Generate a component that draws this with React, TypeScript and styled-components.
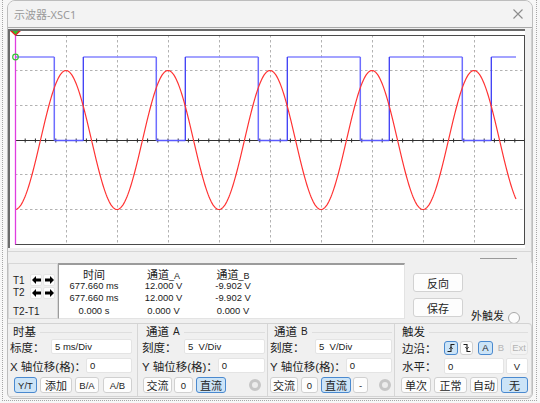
import React from 'react';
import styled, { createGlobalStyle } from 'styled-components';

const SANS = `"Liberation Sans", "Noto Sans CJK SC", sans-serif`;

const GlobalStyle = createGlobalStyle`
  html, body { margin: 0; padding: 0; background: #f7f7f7; }
  body { font-family: ${SANS}; color: #1e1e1e; }
  * { box-sizing: border-box; }
`;

const Desk = styled.div`
  margin-left: 2px;
  width: 535px;
  height: 401px;
  border-left: 1px dotted #a6a6a6;
  border-right: 1px dotted #a6a6a6;
  border-bottom: 1px dotted #a6a6a6;
  padding-left: 4px;
`;

const Window = styled.div`
  width: 526px;
  height: 399px;
  border: 1px solid #bdbdbd;
  border-radius: 8px 8px 6px 6px;
  background: #f0f0f0;
  display: flex;
  flex-direction: column;
  overflow: hidden;
`;

const TitleBar = styled.div`
  height: 27px;
  flex: none;
  background: #f3f3f3;
  border-bottom: 1px solid #a9a9a9;
  display: flex;
  align-items: center;
  justify-content: space-between;
  padding: 0 9px 1px 6px;
  font-family: "Noto Sans", "Noto Sans CJK SC", sans-serif;
  font-size: 11px;
  color: #9a9a9a;
`;

const ScreenArea = styled.div`
  margin-top: 1px;
  width: 524px;
  border-right: 1px solid #d0d0d0;
  display: flex;
  flex-direction: column;
`;

const Screen = styled.div`
  width: 517px;
  height: 219px;
  border-top: 2px solid #6b6b6b;
  border-left: 2px solid #6b6b6b;
  background: #fff;
  display: flex;
`;

const Strip = styled.div`
  height: 15px;
  padding-top: 3px;
  display: flex;
  flex-direction: column;
`;

const Rule = styled.div`
  height: 1px;
  background: #d6d6d6;
`;

const Thumb = styled.div`
  align-self: flex-end;
  width: 37px;
  height: 1px;
  margin-top: 6px;
  margin-right: 14px;
  background: #9a9a9a;
`;

const Readout = styled.div`
  height: 56px;
  display: flex;
  flex: none;
`;

const CursorBox = styled.div`
  width: 50px;
  border: 1px solid #d7d7d7;
  background: #f0f0f0;
  padding: 10px 0 0 4px;
  display: flex;
  flex-direction: column;
`;

const CursorRow = styled.div<{ $h: number; $mt?: number }>`
  height: ${p => p.$h}px;
  margin-top: ${p => p.$mt ?? 0}px;
  display: grid;
  grid-template-columns: 16px 12px 12px;
  column-gap: 1px;
  align-items: center;
  font-size: 10px;
  white-space: nowrap;
`;

const ArrowBtn = styled.div`
  width: 12px;
  height: 12px;
  background: #fdfdfd;
  border: 1px solid #e6e6e6;
  border-radius: 2px;
  display: flex;
  align-items: center;
  justify-content: center;
`;

const DataBox = styled.div`
  width: 347px;
  background: #fff;
  border-top: 2px solid #9b9b9b;
  border-left: 1px solid #9b9b9b;
  border-right: 1px solid #e3e3e3;
  border-bottom: 1px solid #e3e3e3;
  padding-top: 3px;
  display: grid;
  grid-template-columns: 70px 69px 70px;
  grid-template-rows: 11px 12px 13px 13px;
  justify-items: center;
  align-items: center;
  align-content: start;
  font-size: 9.4px;
  color: #1a1a1a;
`;

const HeadCell = styled.div`
  font-size: 11px;
  white-space: nowrap;
  color: #222;
`;

const Sub = styled.span<{ $size?: number }>`
  font-size: ${p => p.$size ?? 9}px;
`;

const SideButtons = styled.div`
  margin-left: 8px;
  padding-top: 10px;
  display: flex;
  flex-direction: column;
  gap: 6px;
`;

const SideBtn = styled.button`
  width: 50px;
  height: 19px;
  padding: 0;
  border: 1px solid #d2d2d2;
  border-radius: 3px;
  background: #fdfdfd;
  font-family: ${SANS};
  font-size: 11px;
  color: #222;
  display: flex;
  align-items: center;
  justify-content: center;
`;

const ExtTrig = styled.div`
  margin-left: 8px;
  align-self: flex-end;
  margin-bottom: -3px;
  height: 14px;
  display: flex;
  align-items: center;
  gap: 4px;
  font-size: 11px;
  color: #222;
`;

const Radio = styled.div`
  width: 12px;
  height: 12px;
  margin-top: 5px;
  border-radius: 50%;
  border: 1px solid #a8a8a8;
  background: #fcfcfc;
`;

const Panel = styled.div`
  margin-top: 4px;
  width: 524px;
  height: 74px;
  border: 1px solid #d3d3d3;
  border-left: none;
  border-radius: 0 4px 4px 0;
  display: flex;
`;

const Group = styled.div<{ $w?: number; $pl: number; $pr: number; $sep?: boolean }>`
  ${p => (p.$w ? `width: ${p.$w}px;` : 'flex: 1;')}
  padding-left: ${p => p.$pl}px;
  padding-right: ${p => p.$pr}px;
  border-right: ${p => (p.$sep ? '1px solid #d6d6d6' : 'none')};
  display: flex;
  flex-direction: column;
`;

const GroupHead = styled.div<{ $ml: number }>`
  height: 14px;
  margin-left: ${p => p.$ml}px;
  display: flex;
  align-items: center;
  gap: 4px;
  font-size: 11.5px;
  color: #222;
  white-space: nowrap;
`;

const HeadRule = styled.div`
  flex: 1;
  height: 1px;
  margin-top: 3px;
  background: #dedede;
`;

const FieldRow = styled.div<{ $h: number; $mt: number }>`
  height: ${p => p.$h}px;
  margin-top: ${p => p.$mt}px;
  display: flex;
  align-items: center;
  justify-content: space-between;
`;

const Label = styled.span`
  font-size: 11.5px;
  white-space: nowrap;
  color: #1e1e1e;
`;

const Field = styled.div<{ $w: number; $h?: number; $ml?: number; $center?: boolean }>`
  width: ${p => p.$w}px;
  height: ${p => p.$h ?? 15}px;
  margin-left: ${p => p.$ml ?? 0}px;
  background: #fff;
  border: 1px solid #e4e4e4;
  border-radius: 2px;
  padding-left: ${p => (p.$center ? 0 : 3)}px;
  display: flex;
  align-items: center;
  justify-content: ${p => (p.$center ? 'center' : 'flex-start')};
  font-size: 9.5px;
  color: #1a1a1a;
  white-space: pre;
`;

const BtnRow = styled.div<{ $mt: number; $h: number }>`
  height: ${p => p.$h}px;
  margin-top: ${p => p.$mt}px;
  display: flex;
  align-items: center;
`;

const Btn = styled.button<{ $w: number; $ml?: number; $on?: boolean; $off?: boolean; $latin?: boolean; $h?: number; $bare?: boolean }>`
  width: ${p => p.$w}px;
  height: ${p => p.$h ?? 16}px;
  margin-left: ${p => p.$ml ?? 0}px;
  padding: 0;
  flex: none;
  border: 1px solid ${p => (p.$on ? '#4a89cf' : p.$bare ? 'transparent' : p.$off ? '#e4e4e4' : '#d0d0d0')};
  border-radius: 3px;
  background: ${p => (p.$on ? '#cce4f7' : p.$bare ? 'transparent' : p.$off ? '#f3f3f3' : '#fdfdfd')};
  color: ${p => (p.$off || p.$bare ? '#b4b4b4' : '#1e1e1e')};
  font-family: ${SANS};
  font-size: ${p => (p.$latin ? 9.5 : 11)}px;
  display: flex;
  align-items: center;
  justify-content: center;
  white-space: nowrap;
`;

const Knob = styled.div<{ $ml: number }>`
  width: 12px;
  height: 12px;
  margin-left: ${p => p.$ml}px;
  border-radius: 50%;
  border: 3px solid #c6c6c6;
  background: #ececec;
  flex: none;
`;

/* ---------- scope drawing ---------- */

const sinePath = (() => {
  let d = '';
  for (let x = 15; x <= 516; x += 1) {
    const y = 140 + 69.5 * Math.cos((2 * Math.PI * (x - 15)) / 102);
    d += `${x === 15 ? 'M' : 'L'}${x} ${y.toFixed(2)} `;
  }
  return d;
})();

const rises = [83.3, 185.3, 287.3, 389.3, 491.3];
const falls = [54.3, 156.3, 258.3, 360.3, 462.3];
const highs: [number, number][] = [
  [15, 54.3],
  [83.3, 156.3],
  [185.3, 258.3],
  [287.3, 360.3],
  [389.3, 462.3],
  [491.3, 516],
];
const lows: [number, number][] = falls.map((f, i) => [f, rises[i]]);

const vGrid = Array.from({ length: 9 }, (_, i) => Math.round(15 + 51 * (i + 1)) + 0.5);
const hGrid = [70.5, 105.5, 174.5, 209.5];
const ticks = Array.from({ length: 50 }, (_, i) => 15 + 10.2 * (i + 1));

const ScopeSvg = () => (
  <svg width={515} height={217} viewBox="10 31 515 217">
    {vGrid.map(x => (
      <line key={'v' + x} x1={x} y1={35} x2={x} y2={244} stroke="#b2b2b2" strokeDasharray="2.5 2.5" />
    ))}
    {hGrid.map(y => (
      <line key={'h' + y} x1={15} y1={y} x2={524} y2={y} stroke="#b2b2b2" strokeDasharray="2.5 2.5" />
    ))}
    <line x1={15} y1={35.5} x2={524.5} y2={35.5} stroke="#4a4a4a" />
    <line x1={524.5} y1={35} x2={524.5} y2={244.5} stroke="#4a4a4a" />
    <line x1={15} y1={244.5} x2={524.5} y2={244.5} stroke="#4a4a4a" />
    <line x1={15} y1={140.5} x2={524} y2={140.5} stroke="#303030" />
    {ticks.map(x => (
      <line key={'t' + x} x1={x} y1={138.5} x2={x} y2={142.5} stroke="#303030" />
    ))}
    {lows.map(([a, b]) => (
      <line key={'l' + a} x1={a} y1={140.5} x2={b} y2={140.5} stroke="#5a5aff" strokeWidth={1.3} />
    ))}
    {highs.map(([a, b]) => (
      <line key={'hi' + a} x1={a} y1={57} x2={b} y2={57} stroke="#8585ff" strokeWidth={1.4} />
    ))}
    {rises.map(x => (
      <line key={'r' + x} x1={x} y1={57} x2={x} y2={140.5} stroke="#3b3bf5" strokeWidth={1.3} />
    ))}
    {falls.map(x => (
      <line key={'f' + x} x1={x} y1={57} x2={x} y2={140.5} stroke="#6d6dff" strokeWidth={1.5} />
    ))}
    <path d={sinePath} fill="none" stroke="#ff3434" strokeWidth={1.2} />
    <line x1={15.5} y1={30} x2={15.5} y2={244.5} stroke="#e03de0" strokeWidth={1.3} />
    <circle cx={15.5} cy={57} r={2.8} fill="none" stroke="#36c436" strokeWidth={1.2} />
    <polygon points="9,30 22,30 15.5,36" fill="#e52222" />
    <polygon points="12,30.5 19,30.5 15.5,34.5" fill="#2fc02f" />
  </svg>
);

const ArrowIcon = ({ dir }: { dir: 'l' | 'r' }) => (
  <svg width={9} height={8} viewBox="0 0 9 8">
    <path
      d="M0 4 L4 0 V2.4 H9 V5.6 H4 V8 Z"
      fill="#000"
      transform={dir === 'r' ? 'translate(9 0) scale(-1 1)' : undefined}
    />
  </svg>
);

const EdgeIcon = ({ rise }: { rise: boolean }) => (
  <svg width={10} height={10} viewBox="0 0 10 10">
    <path
      d={rise ? 'M1.5 8.5 H5 V1.5 H8.5' : 'M1.5 1.5 H5 V8.5 H8.5'}
      fill="none"
      stroke="#1e1e1e"
      strokeWidth={1.1}
    />
    <path
      d={rise ? 'M3.4 5.8 L5 4.2 L6.6 5.8' : 'M3.4 4.2 L5 5.8 L6.6 4.2'}
      fill="none"
      stroke="#1e1e1e"
      strokeWidth={1}
    />
  </svg>
);

const CloseIcon = () => (
  <svg width={10} height={10} viewBox="0 0 10 10">
    <path d="M0.5 0.5 L9.5 9.5 M9.5 0.5 L0.5 9.5" stroke="#8c8c8c" strokeWidth={1.1} />
  </svg>
);

export default function App() {
  return (
    <>
      <GlobalStyle />
      <Desk>
        <Window>
          <TitleBar>
            <span>示波器-XSC1</span>
            <CloseIcon />
          </TitleBar>

          <ScreenArea>
            <Screen>
              <ScopeSvg />
            </Screen>
            <Strip>
              <Rule />
              <Thumb />
            </Strip>
          </ScreenArea>

          <Readout>
            <CursorBox>
              <CursorRow $h={12}>
                <span>T1</span>
                <ArrowBtn><ArrowIcon dir="l" /></ArrowBtn>
                <ArrowBtn><ArrowIcon dir="r" /></ArrowBtn>
              </CursorRow>
              <CursorRow $h={13}>
                <span>T2</span>
                <ArrowBtn><ArrowIcon dir="l" /></ArrowBtn>
                <ArrowBtn><ArrowIcon dir="r" /></ArrowBtn>
              </CursorRow>
              <CursorRow $h={13} $mt={6}>
                <span>T2-T1</span>
              </CursorRow>
            </CursorBox>
            <DataBox>
              <HeadCell>时间</HeadCell>
              <HeadCell>通道<Sub>_A</Sub></HeadCell>
              <HeadCell>通道<Sub>_B</Sub></HeadCell>
              <span>677.660 ms</span>
              <span>12.000 V</span>
              <span>-9.902 V</span>
              <span>677.660 ms</span>
              <span>12.000 V</span>
              <span>-9.902 V</span>
              <span>0.000 s</span>
              <span>0.000 V</span>
              <span>0.000 V</span>
            </DataBox>
            <SideButtons>
              <SideBtn>反向</SideBtn>
              <SideBtn>保存</SideBtn>
            </SideButtons>
            <ExtTrig>
              <span>外触发</span>
              <Radio />
            </ExtTrig>
          </Readout>

          <Panel>
            <Group $w={130} $pl={2} $pr={5} $sep>
              <GroupHead $ml={3}>时基<HeadRule /></GroupHead>
              <FieldRow $h={15} $mt={1}>
                <Label>标度：</Label>
                <Field $w={81}>5 ms/Div</Field>
              </FieldRow>
              <FieldRow $h={15} $mt={4}>
                <Label>X 轴位移(格)：</Label>
                <Field $w={49}>0</Field>
              </FieldRow>
              <BtnRow $h={16} $mt={4}>
                <Btn $w={23} $ml={4} $on $latin>Y/T</Btn>
                <Btn $w={32} $ml={3}>添加</Btn>
                <Btn $w={24} $ml={3} $latin>B/A</Btn>
                <Btn $w={29} $ml={4} $latin>A/B</Btn>
              </BtnRow>
            </Group>

            <Group $w={130} $pl={4} $pr={2} $sep>
              <GroupHead $ml={4}>通道 <Sub $size={10}>A</Sub><HeadRule /></GroupHead>
              <FieldRow $h={15} $mt={1}>
                <Label>刻度：</Label>
                <Field $w={81}>{'5  V/Div'}</Field>
              </FieldRow>
              <FieldRow $h={15} $mt={4}>
                <Label>Y 轴位移(格)：</Label>
                <Field $w={52}>0</Field>
              </FieldRow>
              <BtnRow $h={16} $mt={4}>
                <Btn $w={29} $ml={1}>交流</Btn>
                <Btn $w={19} $ml={2} $latin>0</Btn>
                <Btn $w={30} $ml={3} $on>直流</Btn>
                <Knob $ml={23} />
              </BtnRow>
            </Group>

            <Group $w={127} $pl={2} $pr={2} $sep>
              <GroupHead $ml={4}>通道 <Sub $size={10}>B</Sub><HeadRule /></GroupHead>
              <FieldRow $h={15} $mt={1}>
                <Label>刻度：</Label>
                <Field $w={77}>{'5  V/Div'}</Field>
              </FieldRow>
              <FieldRow $h={15} $mt={4}>
                <Label>Y 轴位移(格)：</Label>
                <Field $w={50}>0</Field>
              </FieldRow>
              <BtnRow $h={16} $mt={4}>
                <Btn $w={28} $ml={0}>交流</Btn>
                <Btn $w={17} $ml={3} $latin>0</Btn>
                <Btn $w={30} $ml={3} $on>直流</Btn>
                <Btn $w={15} $ml={2} $latin>-</Btn>
                <Knob $ml={11} />
              </BtnRow>
            </Group>

            <Group $pl={7} $pr={3}>
              <GroupHead $ml={0}>触发<HeadRule /></GroupHead>
              <FieldRow $h={15} $mt={2}>
                <Label>边沿：</Label>
                <BtnRow $h={14} $mt={0}>
                  <Btn $w={14} $h={14} $on><EdgeIcon rise /></Btn>
                  <Btn $w={13} $h={14} $ml={2}><EdgeIcon rise={false} /></Btn>
                  <Btn $w={15} $h={14} $ml={5} $on $latin>A</Btn>
                  <Btn $w={12} $h={14} $ml={2} $bare $latin>B</Btn>
                  <Btn $w={18} $h={14} $ml={3} $off $latin>Ext</Btn>
                </BtnRow>
              </FieldRow>
              <FieldRow $h={16} $mt={3}>
                <Label>水平：</Label>
                <BtnRow $h={16} $mt={0}>
                  <Field $w={60} $h={16}>0</Field>
                  <Field $w={22} $h={16} $ml={2} $center>V</Field>
                </BtnRow>
              </FieldRow>
              <BtnRow $h={16} $mt={3}>
                <Btn $w={30} $ml={-1}>单次</Btn>
                <Btn $w={33} $ml={3}>正常</Btn>
                <Btn $w={28} $ml={3}>自动</Btn>
                <Btn $w={27} $ml={3} $on>无</Btn>
              </BtnRow>
            </Group>
          </Panel>
        </Window>
      </Desk>
    </>
  );
}
